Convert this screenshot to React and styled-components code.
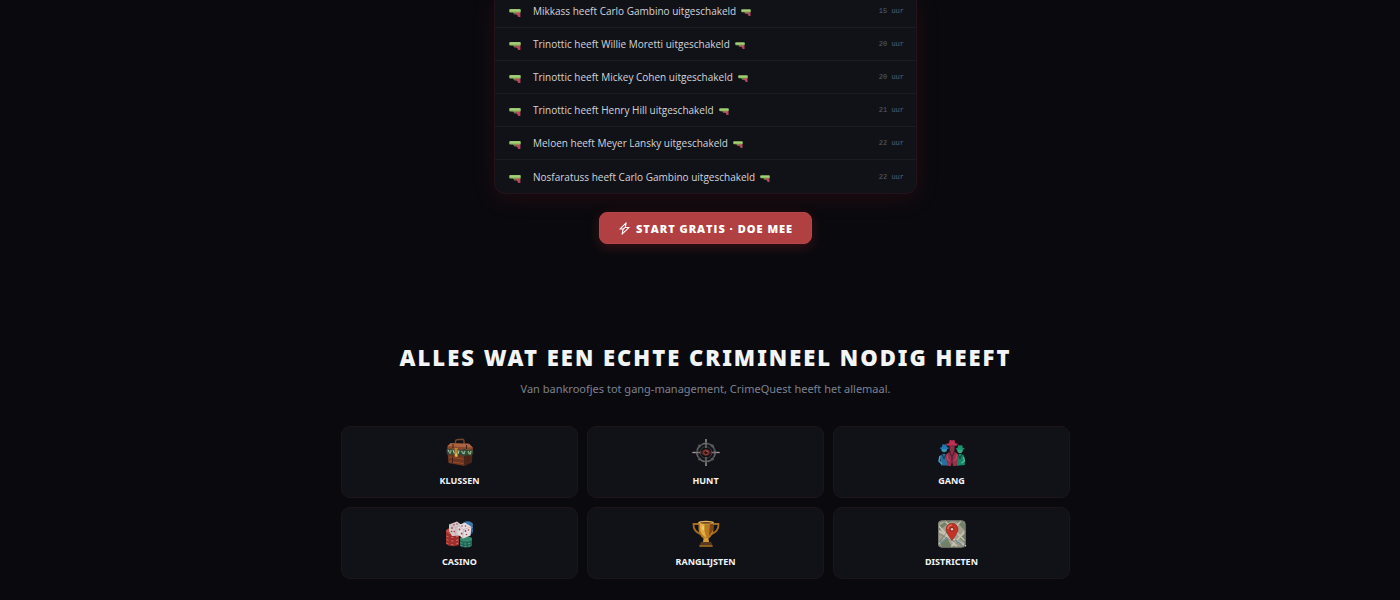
import styled, { createGlobalStyle } from "styled-components";

const GlobalStyle = createGlobalStyle`
    * {
        box-sizing: border-box;
    }
    body {
        margin: 0;
        background-color: #0a0a0e;
        color: #f3f4f6;
        font-family: "Segoe UI", "Noto Sans", "Open Sans", sans-serif;
    }
`;

const Container = styled.main`
    display: flex;
    flex-direction: column;
    align-items: center;
    padding: 0 0 21px 11px;
`;

const Activity = styled.section`
    display: flex;
    flex-direction: column;
    align-items: center;
    width: 100%;
`;

const Feed = styled.ul`
    width: 100%;
    max-width: 423px;
    margin: 0 0 18px;
    padding: 0;
    list-style: none;
    background-color: #111217;
    border: 1px solid #24131a;
    border-top: none;
    border-radius: 0 0 11px 11px;
    box-shadow: 0 4px 22px rgba(127, 20, 29, 0.2);
`;

const FeedItem = styled.li`
    display: flex;
    align-items: center;
    height: 33px;
    padding: 0 12px 0 14px;
    border-bottom: 1px solid #1a1c23;
    &:first-child {
        height: 28px;
        padding-bottom: 5px;
    }
    &:last-child {
        border-bottom: none;
    }
`;

const Message = styled.span`
    flex: 1;
    display: flex;
    align-items: center;
    gap: 5px;
    margin-left: 12px;
    font-family: "Segoe UI", "Open Sans", sans-serif;
    font-size: 10px;
    line-height: 16px;
    color: #d1d5db;
`;

const Time = styled.time`
    font-family: "Liberation Mono", monospace;
    font-size: 7px;
    color: #566072;
`;

const StartButton = styled.button`
    display: flex;
    align-items: center;
    gap: 5px;
    height: 32px;
    padding: 0 18px;
    border: 1px solid #b54547;
    border-radius: 8px;
    background-color: #b14042;
    box-shadow: 0 3px 12px rgba(177, 40, 45, 0.28);
    color: #ffffff;
    font-family: "Segoe UI", "Open Sans", sans-serif;
    font-size: 11px;
    font-weight: 900;
    letter-spacing: 1px;
    text-transform: uppercase;
    cursor: pointer;
`;

const Features = styled.section`
    width: 100%;
    max-width: 729px;
    margin-top: 97px;
    text-align: center;
`;

const Title = styled.h2`
    margin: 0;
    font-size: 22px;
    font-weight: 900;
    line-height: 32px;
    letter-spacing: 2px;
    text-transform: uppercase;
    white-space: nowrap;
`;

const Desc = styled.p`
    margin: 7px 0 28px;
    font-size: 11px;
    line-height: 18px;
    color: #7b8190;
`;

const Grid = styled.div`
    display: grid;
    grid-template-columns: repeat(3, 1fr);
    gap: 9px;
`;

const Card = styled.article`
    display: flex;
    flex-direction: column;
    align-items: center;
    gap: 6px;
    height: 72px;
    padding-top: 11px;
    background-color: #111217;
    border: 1px solid #1e151b;
    border-radius: 9px;
`;

const CardTitle = styled.h3`
    margin: 0;
    font-size: 9px;
    font-weight: 700;
    line-height: 14px;
    text-transform: uppercase;
`;

const Pistol = ({ size }) => (
    <svg width={size} height={size} viewBox="0 0 12 12" aria-hidden="true">
        <path d="M3.6 7h3.2v2.6H5.4z" fill="#697b43" />
        <path d="M6 7h5.4v5H9.2L8.2 10 6.4 9.3z" fill="#b94460" />
        <path d="M7.4 7.5h1.4l1 2.2H8.4z" fill="#8c6a48" />
        <rect x="0.2" y="4" width="11.6" height="3.4" rx="1" fill="#91bd63" />
        <path d="M1.2 5.2h9.6" stroke="#b4d989" strokeWidth="0.9" />
    </svg>
);

const Bolt = () => (
    <svg width="13" height="13" viewBox="0 0 24 24" fill="none" stroke="currentColor" strokeWidth="2" strokeLinejoin="round" aria-hidden="true">
        <path d="M15 1.5 3.5 13h6L7.5 22.5 20.5 10h-7z" />
        <path d="m13.5 10-4 3" />
    </svg>
);

const Briefcase = () => (
    <svg width="30" height="30" viewBox="0 0 30 30" aria-hidden="true">
        <path d="M10.5 6V3.5q0-1.5 1.5-1.7l5-.5q2 0 2 2v3" fill="none" stroke="#72452e" strokeWidth="1.4" />
        <path d="m2.5 8 3-2.8 18.5.6 3.8 3.8v6H2.2z" fill="#8b482b" />
        <path d="m5.5 5.2 18.5.6 3.8 3.8-25.3-1.4z" fill="#ac6541" />
        <path d="m2.5 15 17 2v11L3.5 25z" fill="#70351f" />
        <path d="m19.5 17 8-2-.6 9.5-7.4 3.5z" fill="#4c2418" />
        <path d="m4.3 19 14 2M4.5 23.5l14 2" stroke="#9b5431" strokeWidth="0.8" />
        <path d="m1.5 11.2 4-.7 3 1.2 3-1 4 1.4 4-1.2 3.4 1.3 3.8-1 1.8 2.5-1.8 4-4.2-.6-3 1-3.7-1.2-3.8.7-3.2-1.2-3.2.5-3.8-1.2z" fill="#324b38" />
        <path d="m3 12 2.3 3.3M6 12l-.7 3.5M8 12.2l1.5 3.2M14 12.5l-1 3.2M16.5 13l2 3M20 13l-1.2 3M23 13.3l1.4 3M26 13l-.8 3.2" stroke="#a9c7a2" strokeWidth="1.2" />
        <path d="m4 14 2-.5m5-.4 1.7 1.3m4.5.8 2.5-1.5m3.3 1.5 2.7-.9" stroke="#698d6a" strokeWidth="1.3" />
        <path d="M9.6 10h3v9l-3-.6z" fill="#bd8430" />
        <path d="M10.2 15.5h2.1v3h-2.1z" fill="#edbc53" />
        <path d="M8 6v4M21.5 7v4M7.5 19v6M23 19v6" stroke="#3e2018" strokeWidth="1" />
    </svg>
);

const Crosshair = () => (
    <svg width="30" height="30" viewBox="0 0 30 30" fill="none" aria-hidden="true">
        <circle cx="15" cy="14.5" r="9" stroke="#4a4a4d" strokeWidth="1.8" />
        <circle cx="15" cy="14.5" r="9.3" stroke="#858080" strokeWidth="0.6" strokeDasharray="5 3" />
        <circle cx="15" cy="14.5" r="5.8" stroke="#3d3e42" strokeWidth="1" />
        <path d="M15 1v9M15 19v9M1.5 14.5H10M20 14.5h8.5" stroke="#777476" strokeWidth="1.3" />
        <path d="M15 1v3M15 25v3M1.5 14.5h3M25.5 14.5h3" stroke="#aaa5a2" strokeWidth="0.8" />
        <path d="m7.5 7 2 2m11 11 2 2m0-15-2 2m-11 11-2 2" stroke="#5c5858" strokeWidth="2" />
        <path d="M9 14.5q6-6.5 12 0-6 6.5-12 0z" fill="#45201f" />
        <circle cx="15" cy="14.5" r="3" fill="#87382f" />
        <circle cx="15" cy="14.5" r="1.6" fill="#281112" />
        <circle cx="16" cy="13.5" r="0.6" fill="#d7947c" />
    </svg>
);

const Gangsters = () => (
    <svg width="30" height="30" viewBox="0 0 30 30" aria-hidden="true">
        <path d="m3 17.5 4-2 4 2.5v9.5H4z" fill="#266f9e" />
        <circle cx="7.2" cy="11.5" r="2.8" fill="#3795b7" />
        <path d="M3 9.8 5 9l.6-3 1.6.7 2-.8.7 3.1 2 .8-.7 1.2-7.7-.1z" fill="#1f77b5" />
        <path d="m5 16.5 2 4 2-4" stroke="#163954" fill="none" strokeWidth="1.2" />
        <path d="m3 18-1 5 3 3" stroke="#48a8cf" strokeWidth="1.4" fill="none" />
        <path d="m18.5 18 4.5-2.5 4 2L28 27l-8 .8z" fill="#16866a" />
        <circle cx="23" cy="12.2" r="2.8" fill="#38a57e" />
        <path d="m18.8 10.4 1.8-.7.6-2.7 1.9.5 2-.6.6 2.8 1.8.6-.5 1.3-7.8-.1z" fill="#19946f" />
        <path d="m21 16.5 2 4 2-4" stroke="#194a3d" fill="none" strokeWidth="1.2" />
        <path d="m26.5 19 1 4-3 2" stroke="#54c798" strokeWidth="1.2" fill="none" />
        <path d="m9.4 16 3.6-2.5h4.3l3.5 2.5.2 5-1.5 7h-3.5l-1-5-1 5h-3.4l-1.4-7z" fill="#98304a" />
        <path d="m12.5 8 .2 4.5 2.3 2.5 2.5-2.5.2-4.5z" fill="#8a3044" />
        <path d="m9 5.8 3-.6.8-3.4 2.2.7 2.4-.7.8 3.4 2.8.6-1.5 2h-9z" fill="#c32f50" />
        <path d="m12.5 13.5 2.5 5.5 2.5-5.5M15 18v5" stroke="#4e2133" strokeWidth="1.3" fill="none" />
        <path d="m10 16.5.6 5 2.4 1m7-6-1 5-2.4 1" stroke="#d94a65" strokeWidth="0.9" fill="none" />
    </svg>
);

const Chips = () => (
    <svg width="30" height="30" viewBox="0 0 30 30" aria-hidden="true">
        <path d="M18 5v9q5 4 10 0V5z" fill="#234f7d" />
        <ellipse cx="22.5" cy="5.5" rx="5.5" ry="3.2" fill="#3d76a9" />
        <path d="M19 8q5 3 9 0m-9 3q5 3 9 0" stroke="#6796ba" fill="none" strokeDasharray="2 2" />
        <path d="M1 11v14q5 4 13 1V12z" fill="#a02e2d" />
        <ellipse cx="6.5" cy="12" rx="5.5" ry="3" fill="#bd4f48" />
        <path d="M1.5 17q6 3 12 0M1.5 20.5q6 3 12 0M1.5 24q6 3 12 0" stroke="#c5827a" fill="none" strokeDasharray="2 3" />
        <path d="M15 20v7q6 3 12 0v-7z" fill="#1c6557" />
        <ellipse cx="21" cy="20" rx="6.2" ry="2.8" fill="#378a6e" />
        <path d="M15.5 23.5q6 3 11 0m-11 3q6 2 11 0" stroke="#72ad96" fill="none" strokeDasharray="2 2" />
        <path d="m4 5.5 8-3 4 3 .5 11-9.5.5-3-5z" fill="#d6c8c8" />
        <path d="m13 6 7-2.2 6.5 4-1 8.8-7.5 3-5-4z" fill="#e5dcdf" />
        <path d="m4 5.5 7 3L15 6m-4 2.5-.5 8M13 6.5l5.5 4 7.5-2.5m-7.5 2.5-.8 9" stroke="#b5a1a8" fill="none" strokeWidth="0.6" />
        <g fill="#9d4550">
            <circle cx="7" cy="9" r="0.9" />
            <circle cx="9" cy="5.8" r="0.8" />
            <circle cx="12" cy="5" r="0.8" />
            <circle cx="6.5" cy="12.5" r="0.8" />
            <circle cx="9.2" cy="12.6" r="0.8" />
            <circle cx="17" cy="7" r="0.8" />
            <circle cx="20.5" cy="7" r="0.8" />
            <circle cx="14.5" cy="10.5" r="0.9" />
            <circle cx="16.6" cy="14.5" r="0.9" />
            <circle cx="20.5" cy="12" r="0.9" />
            <circle cx="23.5" cy="11" r="0.8" />
            <circle cx="21.5" cy="15.5" r="0.8" />
        </g>
    </svg>
);

const Trophy = () => (
    <svg width="30" height="30" viewBox="0 0 30 30" aria-hidden="true">
        <path d="M8 5H2.5Q2 12 10 15.5M22 5h5.5Q28 12 20 15.5" fill="none" stroke="#a36c22" strokeWidth="1.8" />
        <path d="M7.5 3h15v7q0 6-5 9.5v4h-5v-4q-5-3.5-5-9.5z" fill="#b87920" />
        <path d="M9 4h4.5v8l2 7Q9 15 9 9z" fill="#e4ac43" />
        <path d="M19 4h3v7l-4 6z" fill="#7c481a" />
        <ellipse cx="15" cy="3.5" rx="7.8" ry="1.8" fill="#deb15f" />
        <ellipse cx="15" cy="3.8" rx="6" ry="0.9" fill="#704117" />
        <path d="m13 19-1 4h6l-1-4z" fill="#d89a31" />
        <path d="m10 23-2 4.5h14L20 23z" fill="#56391e" />
        <path d="M8.5 27h13" stroke="#a97226" strokeWidth="1.4" />
        <path d="M12 7v4" stroke="#ffe39a" strokeWidth="1" />
    </svg>
);

const CityMap = () => (
    <svg width="30" height="30" viewBox="0 0 30 30" aria-hidden="true">
        <rect x="1" y="1.5" width="27.5" height="27" rx="4" fill="#a4a28f" />
        <path d="M2 7 10 2h4L2 12zm17-5h6l3 4v6zM2 22l7-5 6 11H5zm20-3 6-4v9z" fill="#718067" />
        <path d="m2 12 27 15M2 25 24 2M8 2l20 20M2 7l18 21M14 28l14-16" stroke="#c9c4b4" strokeWidth="1.5" />
        <path d="m2 15 25 13M3 21 19 3" stroke="#817e72" strokeWidth="0.7" />
        <path d="m3 24 7-5m8 2 7 5" stroke="#769197" strokeWidth="2" />
        <path d="M15 21.5Q9 13.5 9 10.3a6 6 0 0 1 12 0q0 3.2-6 11.2z" fill="#c63326" stroke="#7a271e" strokeWidth="0.6" />
        <path d="M11 10q0-4 4-4" stroke="#ed7562" strokeWidth="1.2" fill="none" />
        <circle cx="15" cy="10.3" r="2.3" fill="#742f27" />
        <circle cx="15" cy="10.3" r="1.3" fill="#e6c3ab" />
        <rect x="1.5" y="2" width="26.5" height="26" rx="3.6" fill="none" stroke="#777b70" />
    </svg>
);

const kills = [
    { player: "Mikkass", target: "Carlo Gambino", time: "15 uur" },
    { player: "Trinottic", target: "Willie Moretti", time: "20 uur" },
    { player: "Trinottic", target: "Mickey Cohen", time: "20 uur" },
    { player: "Trinottic", target: "Henry Hill", time: "21 uur" },
    { player: "Meloen", target: "Meyer Lansky", time: "22 uur" },
    { player: "Nosfaratuss", target: "Carlo Gambino", time: "22 uur" },
];

const features = [
    { name: "Klussen", Icon: Briefcase },
    { name: "Hunt", Icon: Crosshair },
    { name: "Gang", Icon: Gangsters },
    { name: "Casino", Icon: Chips },
    { name: "Ranglijsten", Icon: Trophy },
    { name: "Districten", Icon: CityMap },
];

const App = () => {
    return (
        <>
            <GlobalStyle />
            <Container>
                <Activity>
                    <Feed>
                        {kills.map((kill) => (
                            <FeedItem key={kill.player + kill.target}>
                                <Pistol size={12} />
                                <Message>
                                    {kill.player} heeft {kill.target} uitgeschakeld
                                    <Pistol size={10} />
                                </Message>
                                <Time>{kill.time}</Time>
                            </FeedItem>
                        ))}
                    </Feed>
                    <StartButton type="button">
                        <Bolt />
                        Start gratis · Doe mee
                    </StartButton>
                </Activity>
                <Features>
                    <Title>Alles wat een echte crimineel nodig heeft</Title>
                    <Desc>Van bankroofjes tot gang-management, CrimeQuest heeft het allemaal.</Desc>
                    <Grid>
                        {features.map(({ name, Icon }) => (
                            <Card key={name}>
                                <Icon />
                                <CardTitle>{name}</CardTitle>
                            </Card>
                        ))}
                    </Grid>
                </Features>
            </Container>
        </>
    );
};

export default App;
